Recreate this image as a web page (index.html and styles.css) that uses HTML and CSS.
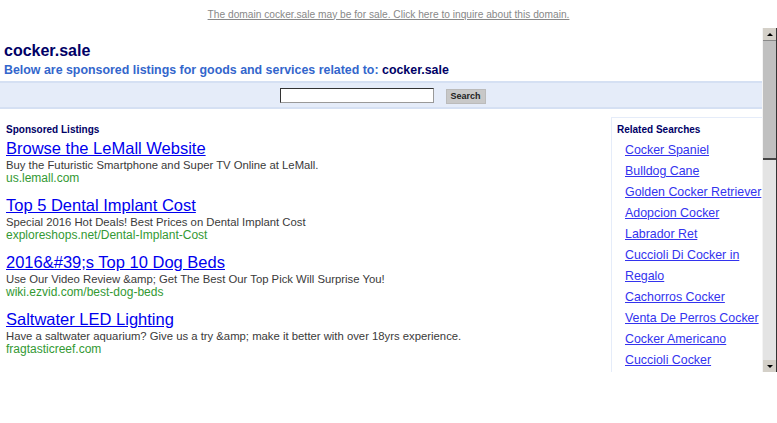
FILE: index.html
```html
<!DOCTYPE html>
<html lang="en">

<head>
    <meta charset="UTF-8">
    <meta name="viewport" content="width=device-width, initial-scale=1.0">
    <title>cocker.sale</title>
    <link rel="stylesheet" href="styles.css">
</head>

<body>

    <div class="topbar">
        <a href="#" class="forsale">The domain cocker.sale may be for sale. Click here to inquire about this domain.</a>
    </div>

    <div class="frame">
        <div class="viewport">
            <div class="header">
                <h1>cocker.sale</h1>
                <p class="related">Below are sponsored listings for goods and services related to: <span>cocker.sale</span></p>
            </div>

            <div class="searchbar">
                <input type="text" class="search-input">
                <button class="search-btn">Search</button>
            </div>

            <div class="content">
                <div class="listings">
                    <h2>Sponsored Listings</h2>

                    <div class="listing">
                        <a href="#" class="title">Browse the LeMall Website</a>
                        <p class="desc">Buy the Futuristic Smartphone and Super TV Online at LeMall.</p>
                        <p class="url">us.lemall.com</p>
                    </div>

                    <div class="listing">
                        <a href="#" class="title">Top 5 Dental Implant Cost</a>
                        <p class="desc">Special 2016 Hot Deals! Best Prices on Dental Implant Cost</p>
                        <p class="url">exploreshops.net/Dental-Implant-Cost</p>
                    </div>

                    <div class="listing">
                        <a href="#" class="title">2016&amp;#39;s Top 10 Dog Beds</a>
                        <p class="desc">Use Our Video Review &amp;amp; Get The Best Our Top Pick Will Surprise You!</p>
                        <p class="url">wiki.ezvid.com/best-dog-beds</p>
                    </div>

                    <div class="listing">
                        <a href="#" class="title">Saltwater LED Lighting</a>
                        <p class="desc">Have a saltwater aquarium? Give us a try &amp;amp; make it better with over 18yrs experience.</p>
                        <p class="url">fragtasticreef.com</p>
                    </div>
                </div>

                <div class="sidebar">
                    <h2>Related Searches</h2>
                    <ul>
                        <li><a href="#">Cocker Spaniel</a></li>
                        <li><a href="#">Bulldog Cane</a></li>
                        <li><a href="#">Golden Cocker Retriever</a></li>
                        <li><a href="#">Adopcion Cocker</a></li>
                        <li><a href="#">Labrador Ret</a></li>
                        <li><a href="#">Cuccioli Di Cocker in Regalo</a></li>
                        <li><a href="#">Cachorros Cocker</a></li>
                        <li><a href="#">Venta De Perros Cocker</a></li>
                        <li><a href="#">Cocker Americano</a></li>
                        <li><a href="#">Cuccioli Cocker</a></li>
                    </ul>
                </div>
            </div>
        </div>

        <div class="scrollbar">
            <div class="arrow up"></div>
            <div class="thumb"></div>
            <div class="track"></div>
            <div class="arrow down"></div>
        </div>
    </div>

</body>

</html>
```

FILE: styles.css
```css
body {
    font-family: 'Liberation Sans', Arial, sans-serif;
    background-color: #fff;
    margin: 0;
    padding: 0;
}

.topbar {
    height: 28px;
    display: flex;
    justify-content: center;
    align-items: center;
}

.forsale {
    color: #888;
    font-size: 10.2px;
}

.frame {
    display: flex;
    height: 344px;
}

.viewport {
    flex: 1;
    overflow: hidden;
}

.header {
    padding: 13px 4px 0;
}

h1 {
    margin: 0;
    font-size: 16px;
    color: #000066;
    line-height: 20px;
}

.related {
    margin: 0;
    font-size: 12.4px;
    font-weight: bold;
    color: #3366cc;
    line-height: 19px;
}

.related span {
    color: #000066;
}

.searchbar {
    margin-top: 1px;
    height: 24px;
    padding-left: 3px;
    background-color: #e5ecf9;
    border-top: 2px solid #d5e0f3;
    border-bottom: 2px solid #d5e0f3;
    display: flex;
    justify-content: center;
    align-items: center;
    gap: 12px;
}

.search-input {
    width: 152px;
    height: 13px;
    padding: 0;
    border: 1px solid #999;
    border-top-color: #333;
    border-left-color: #333;
    background: #fff;
}

.search-btn {
    font-family: 'Liberation Sans', Arial, sans-serif;
    font-size: 9px;
    font-weight: bold;
    color: #222;
    background-color: #c8c8c8;
    border: 1px solid #bbb;
    height: 15px;
    width: 40px;
    padding: 0;
    margin-top: 2px;
}

.content {
    display: flex;
    justify-content: space-between;
    padding: 8px 0 0 6px;
}

h2 {
    margin: 0;
    font-size: 10px;
    color: #000066;
    line-height: 14px;
}

.listings h2 {
    margin: 6px 0 2px;
}

.listing {
    margin-bottom: 11px;
}

.title {
    font-size: 16.5px;
    color: #0000ee;
    line-height: 18px;
}

.desc {
    margin: 0;
    font-size: 11.3px;
    color: #3a3a3a;
    line-height: 14px;
}

.url {
    margin: 0;
    font-size: 12px;
    color: #339933;
    line-height: 13px;
}

.sidebar {
    width: 145px;
    border: 1px solid #e5ecf9;
    border-right: none;
    padding: 5px 0 40px 5px;
}

.sidebar ul {
    list-style: none;
    margin: 3px 0 0;
    padding: 0;
}

.sidebar li {
    font-size: 12.4px;
    line-height: 21px;
    padding-left: 8px;
    text-indent: -8px;
}

.sidebar li a {
    color: #3333ee;
    margin-left: 8px;
}

.scrollbar {
    width: 13px;
    display: flex;
    flex-direction: column;
    background-color: #e4e4e4;
    border-left: 1px solid #f4f4f4;
    border-right: 1px solid #333;
}

.arrow {
    height: 12px;
    background-color: #d4d0c8;
    display: flex;
    justify-content: center;
    align-items: center;
}

.arrow::after {
    content: "";
    border-left: 3px solid transparent;
    border-right: 3px solid transparent;
}

.up::after {
    border-bottom: 3px solid #000;
}

.down::after {
    border-top: 3px solid #000;
}

.thumb {
    height: 117px;
    background-color: #c0c0c0;
    border-bottom: 2px solid #444;
    border-top: 1px solid #888;
}

.track {
    flex: 1;
}
```
